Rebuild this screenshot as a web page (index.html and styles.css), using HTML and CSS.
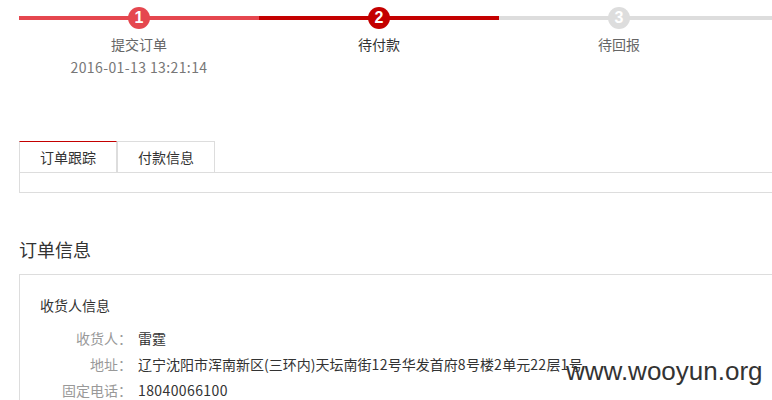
FILE: index.html
```html
<!DOCTYPE html>
<html lang="zh-CN">
<head>
<meta charset="utf-8">
<title>订单详情</title>
<link rel="stylesheet" href="styles.css">
</head>
<body>
<div class="page">
  <div class="steps">
    <div class="step done">
      <div class="step-head"><div class="bar"></div><div class="dot">1</div></div>
      <div class="step-name">提交订单</div>
      <div class="step-time num">2016-01-13 13:21:14</div>
    </div>
    <div class="step current">
      <div class="step-head"><div class="bar"></div><div class="dot">2</div></div>
      <div class="step-name">待付款</div>
    </div>
    <div class="step todo">
      <div class="step-head"><div class="bar"></div><div class="dot">3</div></div>
      <div class="step-name">待回报</div>
    </div>
    <div class="steps-tail"></div>
  </div>

  <div class="tabs">
    <div class="tab active">订单跟踪</div>
    <div class="tab">付款信息</div>
  </div>
  <div class="tab-panel"></div>

  <h2 class="section-title">订单信息</h2>
  <div class="info-box">
    <div class="info-title">收货人信息</div>
    <div class="info-row"><span class="info-label">收货人：</span><span class="info-value">雷霆</span></div>
    <div class="info-row"><span class="info-label">地址：</span><span class="info-value">辽宁沈阳市浑南新区(三环内)天坛南街<span class="num">12</span>号华发首府<span class="num">8</span>号楼<span class="num">2</span>单元<span class="num">22</span>层<span class="num">1</span>号</span></div>
    <div class="info-row"><span class="info-label">固定电话：</span><span class="info-value num">18040066100</span></div>
  </div>
</div>
<div class="watermark">www.wooyun.org</div>
</body>
</html>
```
FILE: styles.css
```css
html, body {
  margin: 0;
  padding: 0;
  overflow: hidden;
  background: #fff;
}
body {
  font-family: "Noto Sans CJK SC", "Liberation Sans", sans-serif;
  font-size: 14px;
  color: #333;
  width: 772px;
  height: 400px;
  position: relative;
}
.page {
  width: 1000px;
  padding-left: 19px;
}
.num {
  letter-spacing: 0.4px;
}
.steps {
  display: flex;
  padding-top: 7px;
}
.step {
  width: 240px;
  display: flex;
  flex-direction: column;
  align-items: center;
}
.steps-tail {
  flex: 1;
  height: 4px;
  margin-top: 9px;
  background: #dddddd;
}
.step-head {
  display: grid;
  width: 100%;
  height: 22px;
}
.bar {
  grid-area: 1 / 1;
  align-self: center;
  height: 4px;
}
.dot {
  grid-area: 1 / 1;
  justify-self: center;
  width: 22px;
  height: 22px;
  border-radius: 50%;
  color: #fff;
  font-family: "Liberation Sans", sans-serif;
  font-weight: bold;
  font-size: 16px;
  line-height: 22px;
  text-align: center;
}
.done .bar, .done .dot { background: #e5474f; }
.current .bar, .current .dot { background: #c40000; }
.todo .bar, .todo .dot { background: #dddddd; }
.step-name {
  margin-top: 4px;
  line-height: 23px;
  color: #666;
}
.current .step-name { color: #333; }
.step-time {
  line-height: 23px;
  color: #777;
}
.tabs {
  display: flex;
  margin-top: 62px;
  border-bottom: 1px solid #ddd;
}
.tab {
  width: 96px;
  height: 30px;
  line-height: 30px;
  text-align: center;
  border: 1px solid #ddd;
  border-bottom: none;
  color: #333;
}
.tab.active {
  border-top-color: #c40000;
}
.tab-panel {
  height: 19px;
  border: 1px solid #ddd;
  border-top: none;
}
.section-title {
  margin: 43px 0 12px;
  font-size: 18px;
  font-weight: normal;
  line-height: 26px;
  color: #333;
}
.info-box {
  border: 1px solid #ddd;
  padding: 17px 0 20px 20px;
}
.info-title {
  line-height: 26px;
  color: #333;
  margin-bottom: 7px;
}
.info-row {
  display: flex;
  line-height: 26px;
}
.info-label {
  width: 92px;
  text-align: right;
  color: #999;
}
.info-value {
  margin-left: 6px;
  color: #333;
}
.watermark {
  position: absolute;
  left: 566px;
  top: 356px;
  font-family: "Liberation Sans", sans-serif;
  font-size: 26px;
  line-height: 30px;
  color: #333;
}
```
